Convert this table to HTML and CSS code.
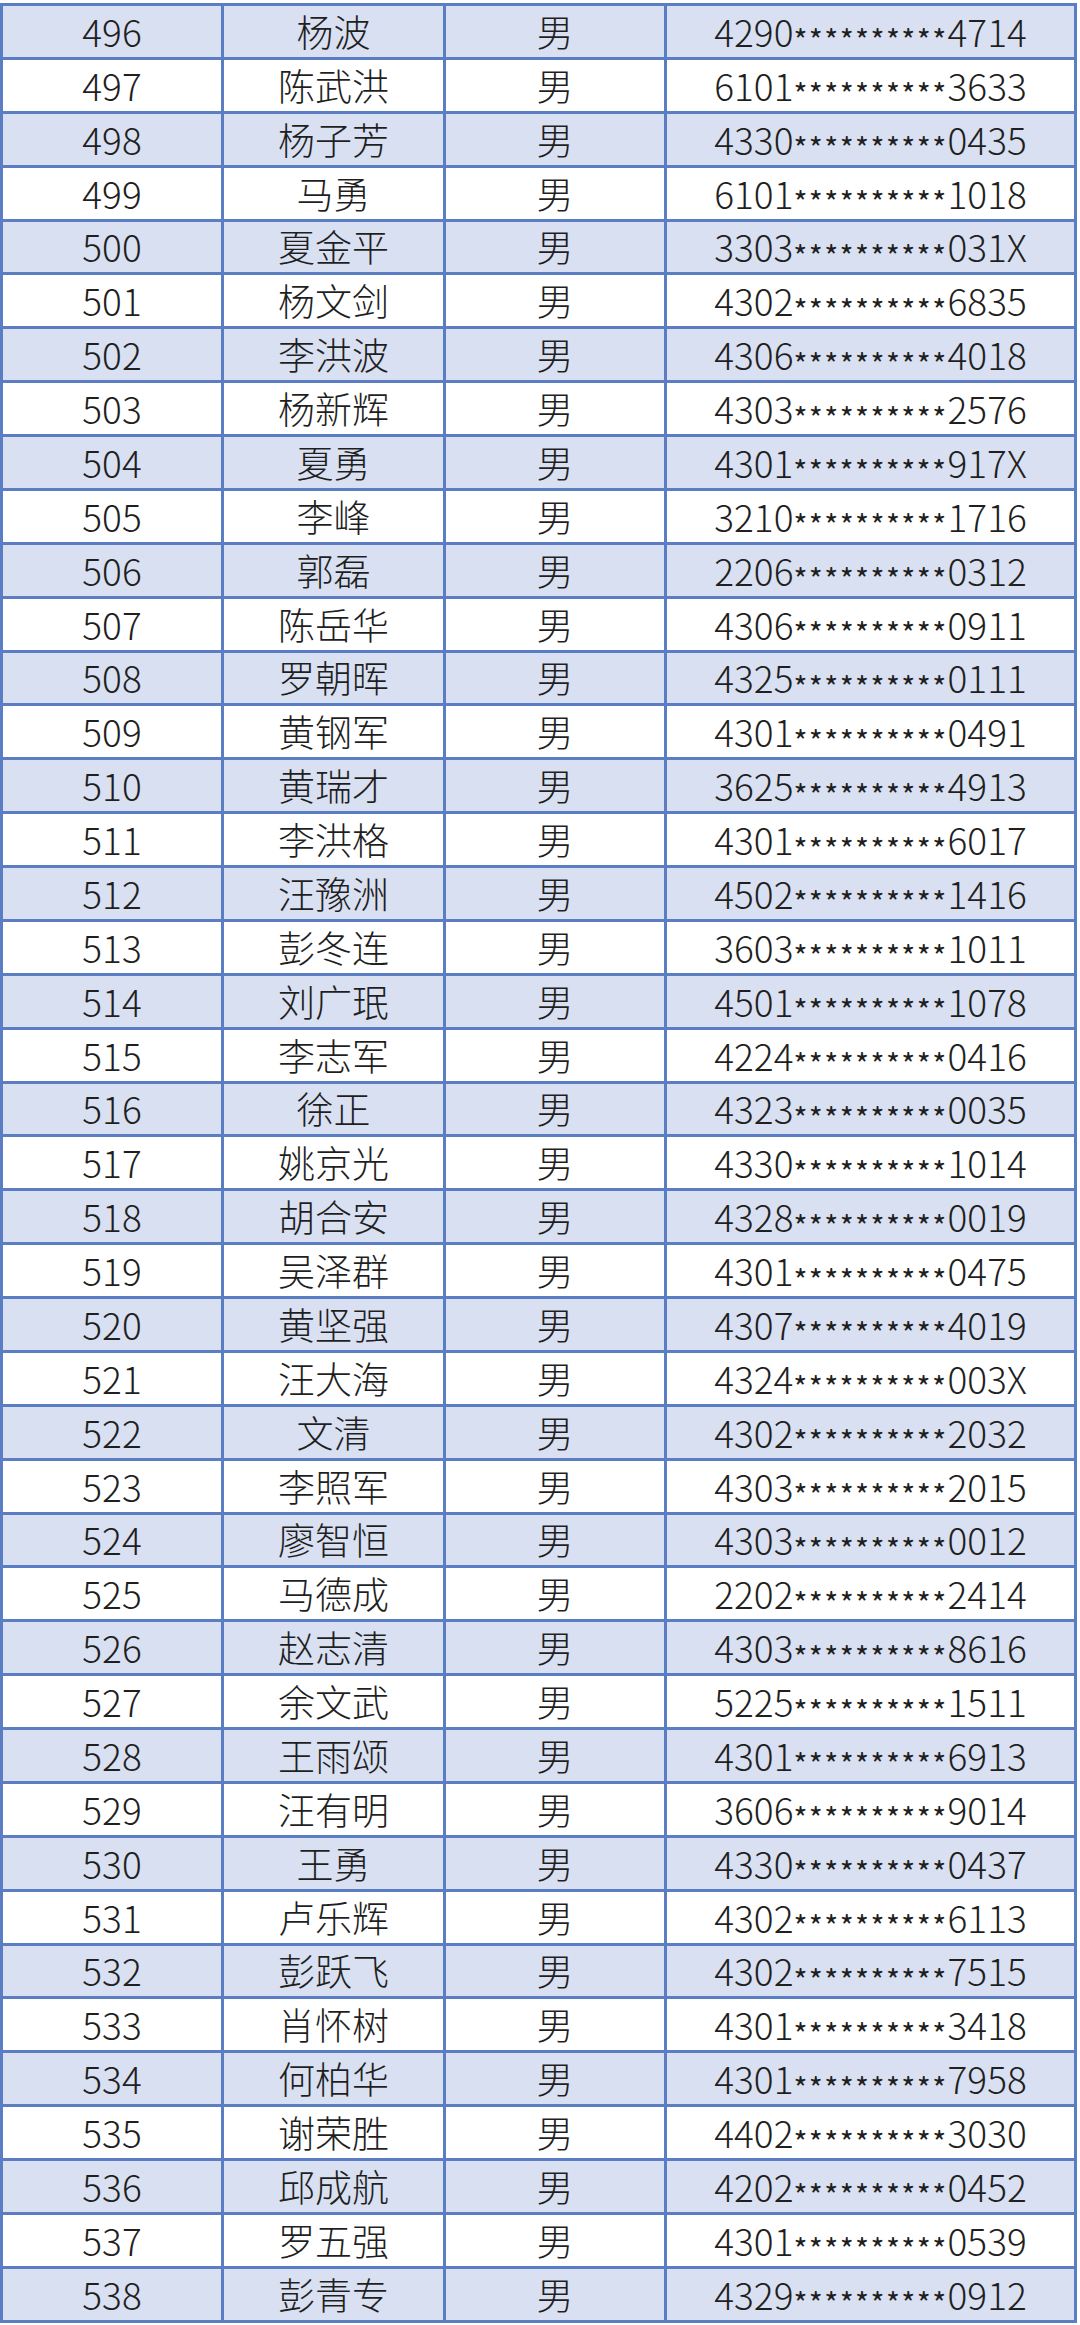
FILE: index.html
```html
<!DOCTYPE html>
<html lang="zh">
<head>
<meta charset="utf-8">
<link rel="stylesheet" href="styles.css">
</head>
<body>
<div class="sheet" id="sheet"></div>
<script src="app.js"></script>
</body>
</html>
```
FILE: styles.css
```css
html, body {
  margin: 0;
  padding: 0;
  background: #ffffff;
}
body {
  padding-top: 3px;
  font-family: "Noto Sans CJK SC", "Noto Sans", sans-serif;
  color: #1f1f1f;
}
.sheet {
  width: 1077px;
  box-sizing: border-box;
  display: grid;
  grid-template-columns: 218px 219px 218px 407px;
  grid-auto-rows: 50.88px;
  gap: 3px;
  padding: 3px;
  background: #5a7dc3;
}
.cell {
  display: flex;
  align-items: center;
  justify-content: center;
  font-size: 37px;
  font-weight: 300;
  line-height: 1;
  background: #ffffff;
  white-space: nowrap;
}
.cell.alt {
  background: #d9e0f2;
}
.cell .mask {
  font-size: 30px;
  font-weight: 400;
  letter-spacing: 1.4px;
  position: relative;
  top: 8px;
}
```
FILE: app.js
```js
const rows = [
["496","杨波","4290","4714"],["497","陈武洪","6101","3633"],["498","杨子芳","4330","0435"],
["499","马勇","6101","1018"],["500","夏金平","3303","031X"],["501","杨文剑","4302","6835"],
["502","李洪波","4306","4018"],["503","杨新辉","4303","2576"],["504","夏勇","4301","917X"],
["505","李峰","3210","1716"],["506","郭磊","2206","0312"],["507","陈岳华","4306","0911"],
["508","罗朝晖","4325","0111"],["509","黄钢军","4301","0491"],["510","黄瑞才","3625","4913"],
["511","李洪格","4301","6017"],["512","汪豫洲","4502","1416"],["513","彭冬连","3603","1011"],
["514","刘广珉","4501","1078"],["515","李志军","4224","0416"],["516","徐正","4323","0035"],
["517","姚京光","4330","1014"],["518","胡合安","4328","0019"],["519","吴泽群","4301","0475"],
["520","黄坚强","4307","4019"],["521","汪大海","4324","003X"],["522","文清","4302","2032"],
["523","李照军","4303","2015"],["524","廖智恒","4303","0012"],["525","马德成","2202","2414"],
["526","赵志清","4303","8616"],["527","余文武","5225","1511"],["528","王雨颂","4301","6913"],
["529","汪有明","3606","9014"],["530","王勇","4330","0437"],["531","卢乐辉","4302","6113"],
["532","彭跃飞","4302","7515"],["533","肖怀树","4301","3418"],["534","何柏华","4301","7958"],
["535","谢荣胜","4402","3030"],["536","邱成航","4202","0452"],["537","罗五强","4301","0539"],
["538","彭青专","4329","0912"]
];
const sheet = document.getElementById('sheet');
rows.forEach((r, i) => {
  const alt = i % 2 === 0 ? ' alt' : '';
  const vals = [r[0], r[1], '男'];
  vals.forEach(v => {
    const c = document.createElement('div');
    c.className = 'cell' + alt;
    c.textContent = v;
    sheet.appendChild(c);
  });
  const id = document.createElement('div');
  id.className = 'cell' + alt;
  const a = document.createElement('span'); a.textContent = r[2];
  const m = document.createElement('span'); m.className = 'mask'; m.textContent = '**********';
  const b = document.createElement('span'); b.textContent = r[3];
  id.append(a, m, b);
  sheet.appendChild(id);
});
```
